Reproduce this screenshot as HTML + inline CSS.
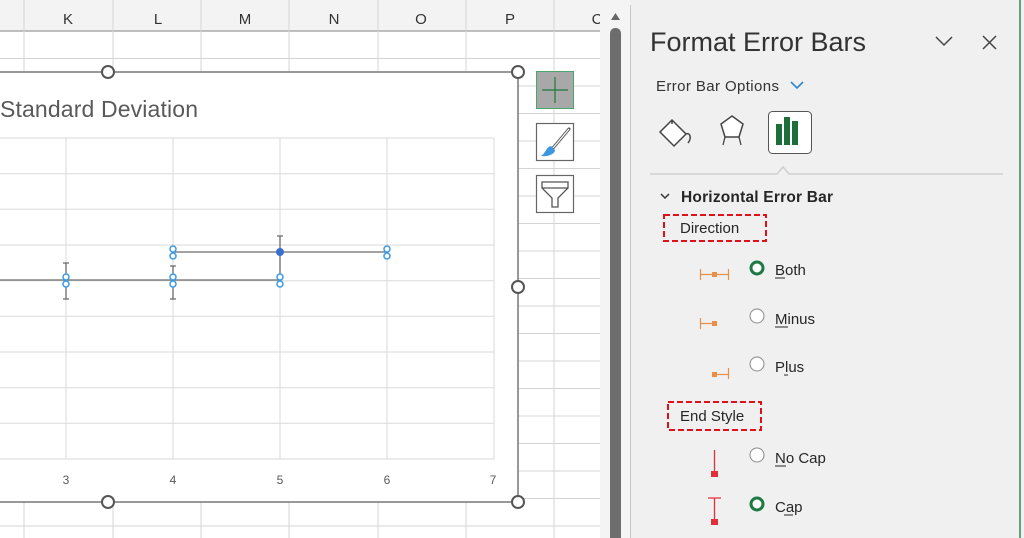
<!DOCTYPE html>
<html><head><meta charset="utf-8"><style>
body{margin:0;width:1024px;height:538px;overflow:hidden;background:#fff;font-family:"Liberation Sans",sans-serif;position:relative}
.a{position:absolute}
</style></head><body>
<svg class="a" style="left:0;top:0" width="1024" height="538">
<rect x="0" y="0" width="600" height="31" fill="#f3f3f3"/>
<line x1="0" y1="31" x2="600" y2="31" stroke="#9a9a9a" stroke-width="1.2"/>
<g stroke="#d4d4d4" stroke-width="1">
<line x1="24" y1="0" x2="24" y2="538"/><line x1="113" y1="0" x2="113" y2="538"/><line x1="201" y1="0" x2="201" y2="538"/><line x1="289" y1="0" x2="289" y2="538"/><line x1="378" y1="0" x2="378" y2="538"/><line x1="466" y1="0" x2="466" y2="538"/><line x1="554" y1="0" x2="554" y2="538"/>
<line x1="0" y1="58.5" x2="600" y2="58.5"/><line x1="0" y1="86" x2="600" y2="86"/><line x1="0" y1="113.5" x2="600" y2="113.5"/><line x1="0" y1="141" x2="600" y2="141"/><line x1="0" y1="168.5" x2="600" y2="168.5"/><line x1="0" y1="196" x2="600" y2="196"/><line x1="0" y1="223.5" x2="600" y2="223.5"/><line x1="0" y1="251" x2="600" y2="251"/><line x1="0" y1="278.5" x2="600" y2="278.5"/><line x1="0" y1="306" x2="600" y2="306"/><line x1="0" y1="333.5" x2="600" y2="333.5"/><line x1="0" y1="361" x2="600" y2="361"/><line x1="0" y1="388.5" x2="600" y2="388.5"/><line x1="0" y1="416" x2="600" y2="416"/><line x1="0" y1="443.5" x2="600" y2="443.5"/><line x1="0" y1="471" x2="600" y2="471"/><line x1="0" y1="498.5" x2="600" y2="498.5"/><line x1="0" y1="526" x2="600" y2="526"/>
</g>
<g font-size="15" fill="#333" text-anchor="middle">
<text x="68" y="24">K</text><text x="158" y="24">L</text><text x="245" y="24">M</text><text x="334" y="24">N</text><text x="421" y="24">O</text><text x="510" y="24">P</text><text x="597" y="24">C</text>
</g>
<rect x="-2" y="72" width="520" height="430" fill="#fff" stroke="#777" stroke-width="1.5"/>
<text x="0" y="117" font-size="23" fill="#595959" textLength="198">Standard Deviation</text>
<g stroke="#dadada" stroke-width="1" fill="none">
<rect x="-2" y="138" width="496" height="321"/>
<line x1="0" y1="173.7" x2="494" y2="173.7"/><line x1="0" y1="209.3" x2="494" y2="209.3"/><line x1="0" y1="245" x2="494" y2="245"/><line x1="0" y1="280.7" x2="494" y2="280.7"/><line x1="0" y1="316.3" x2="494" y2="316.3"/><line x1="0" y1="352" x2="494" y2="352"/><line x1="0" y1="387.7" x2="494" y2="387.7"/><line x1="0" y1="423.3" x2="494" y2="423.3"/>
<line x1="66" y1="138" x2="66" y2="459"/><line x1="173" y1="138" x2="173" y2="459"/><line x1="280" y1="138" x2="280" y2="459"/><line x1="387" y1="138" x2="387" y2="459"/>
</g>
<g stroke="#6a6a6a" stroke-width="1.3" fill="none">
<line x1="0" y1="280" x2="280" y2="280"/><line x1="173" y1="252" x2="387" y2="252"/>
<path d="M66 263V299M63 263H69M63 299H69"/>
<path d="M173 266V299M170 299H176M170 266H176"/>
<path d="M280 236V281M277 236H283"/>
</g>
<g stroke="#3a9ae6" stroke-width="1.5" fill="#fff">
<circle cx="66" cy="277" r="3"/><circle cx="66" cy="284" r="3"/>
<circle cx="173" cy="249" r="3"/><circle cx="173" cy="256" r="3"/><circle cx="173" cy="277" r="3"/><circle cx="173" cy="284" r="3"/>
<circle cx="280" cy="277" r="3"/><circle cx="280" cy="284" r="3"/>
<circle cx="387" cy="249" r="3"/><circle cx="387" cy="256" r="3"/>
</g>
<circle cx="280" cy="252" r="4" fill="#3a6fd0"/>
<g font-size="12" fill="#595959" text-anchor="middle">
<text x="66" y="484">3</text><text x="173" y="484">4</text><text x="280" y="484">5</text><text x="387" y="484">6</text><text x="493" y="484">7</text>
</g>
<g fill="#fff" stroke="#555" stroke-width="2">
<circle cx="108" cy="72" r="6"/><circle cx="518" cy="72" r="6"/><circle cx="518" cy="287" r="6"/><circle cx="108" cy="502" r="6"/><circle cx="518" cy="502" r="6"/>
</g>
<rect x="536.5" y="71.5" width="37" height="37" fill="#a8a8a8" stroke="#4aa66a"/>
<path d="M555 77V103M542 90H568" stroke="#1f7a3e" stroke-width="1.2"/>
<rect x="536.5" y="123.5" width="37" height="37" fill="#fff" stroke="#666" stroke-width="1.2"/>
<path d="M569 129L553 148" stroke="#555" stroke-width="3" stroke-linecap="round"/>
<path d="M569 129L553 148" stroke="#fff" stroke-width="1.2"/>
<path d="M551 146C546 147 546 153 541 156C548 157 555 154 555 150Z" fill="#3c96e0"/>
<rect x="536.5" y="175.5" width="37" height="37" fill="#fff" stroke="#666" stroke-width="1.2"/>
<path d="M542 182H568V188L558 198V207H552V198L542 188Z M542 188H568" fill="none" stroke="#555" stroke-width="1.3"/>
<rect x="600" y="0" width="30" height="538" fill="#f4f4f4"/>
<path d="M611 20L615.5 13L620 20Z" fill="#666"/>
<rect x="610" y="28" width="11" height="520" rx="5" fill="#6d6d6d"/>
<rect x="630" y="0" width="394" height="538" fill="#f0f0f0"/>
<line x1="630.5" y1="5" x2="630.5" y2="538" stroke="#c8c8c8"/>
<line x1="1020" y1="0" x2="1020" y2="538" stroke="#2e8b50" stroke-width="1.5"/>
<text x="650" y="51" font-size="27" fill="#333">Format Error Bars</text>
<path d="M936 37L944 45L952 37" fill="none" stroke="#444" stroke-width="1.5"/>
<path d="M983 36L996 49M996 36L983 49" stroke="#444" stroke-width="1.5"/>
<text x="656" y="91" font-size="15" fill="#333" textLength="123">Error Bar Options</text>
<path d="M791 82L797 88L803 82" fill="none" stroke="#2f86d0" stroke-width="1.6"/>
<path d="M660 132L672 120L686 134L674 146Z" fill="#fff" stroke="#444" stroke-width="1.5"/>
<path d="M686 134C690 132 692 138 688 143" fill="none" stroke="#444" stroke-width="1.5"/>
<path d="M672 120V124" stroke="#444" stroke-width="1.5"/>
<path d="M732 116L743 124L739 137H725L721 124Z" fill="#fff" stroke="#444" stroke-width="1.5"/>
<path d="M725 137L723 145M739 137L741 145" stroke="#444" stroke-width="1.3"/>
<rect x="768.5" y="111.5" width="43" height="42" rx="4" fill="#fff" stroke="#555"/>
<rect x="776" y="124" width="6" height="21" fill="#1e6e3c"/><rect x="784" y="117" width="6" height="28" fill="#1e6e3c"/><rect x="792" y="121" width="6" height="24" fill="#1e6e3c"/>
<path d="M650 174H777L783 167L789 174H1003" fill="none" stroke="#cfcfcf" stroke-width="1.5"/>
<path d="M661 194L665 198L669 194" fill="none" stroke="#333" stroke-width="1.5"/>
<text x="681" y="202" font-size="15.5" font-weight="bold" fill="#262626" textLength="152">Horizontal Error Bar</text>
<rect x="664" y="215" width="102" height="26" fill="none" stroke="#e0101a" stroke-width="2" stroke-dasharray="6,3"/>
<text x="680" y="233" font-size="15" fill="#262626">Direction</text>
<rect x="668" y="402" width="93" height="28" fill="none" stroke="#e0101a" stroke-width="2" stroke-dasharray="6,3"/>
<text x="680" y="421" font-size="15" fill="#262626">End Style</text>
<g stroke="#e8904a" stroke-width="1.2" fill="none">
<path d="M700.5 269V280M700 274.5H729M728.5 269V280"/>
<path d="M700.5 318V329M700 323.5H712"/>
<path d="M717 374.5H729M728.5 368V379"/>
</g>
<rect x="712" y="272" width="5" height="5" fill="#e8904a"/>
<rect x="712" y="321" width="5" height="5" fill="#e8904a"/>
<rect x="712" y="372" width="5" height="5" fill="#e8904a"/>
<g stroke="#e0303a" stroke-width="1.3" fill="none">
<path d="M714.5 450V472"/>
<path d="M708 498H721M714.5 498V520"/>
</g>
<rect x="711" y="471" width="7" height="6" fill="#e0303a"/>
<rect x="711" y="519" width="7" height="6" fill="#e0303a"/>
<circle cx="757" cy="268" r="6" fill="#fff" stroke="#1e7a45" stroke-width="3"/>
<circle cx="757" cy="316" r="7" fill="#fff" stroke="#8a8a8a" stroke-width="1"/>
<circle cx="757" cy="364" r="7" fill="#fff" stroke="#8a8a8a" stroke-width="1"/>
<circle cx="757" cy="455" r="7" fill="#fff" stroke="#8a8a8a" stroke-width="1"/>
<circle cx="757" cy="504" r="6" fill="#fff" stroke="#1e7a45" stroke-width="3"/>
<g font-size="15" fill="#262626">
<text x="775" y="275">Both</text><text x="775" y="324">Minus</text><text x="775" y="372">Plus</text><text x="775" y="463">No Cap</text><text x="775" y="512">Cap</text>
</g>
<g stroke="#262626" stroke-width="1">
<line x1="775" y1="278" x2="785" y2="278"/><line x1="775" y1="327" x2="788" y2="327"/><line x1="784" y1="375" x2="788" y2="375"/><line x1="775" y1="466" x2="786" y2="466"/><line x1="784" y1="515" x2="793" y2="515"/>
</g>
</svg>
</body></html>
